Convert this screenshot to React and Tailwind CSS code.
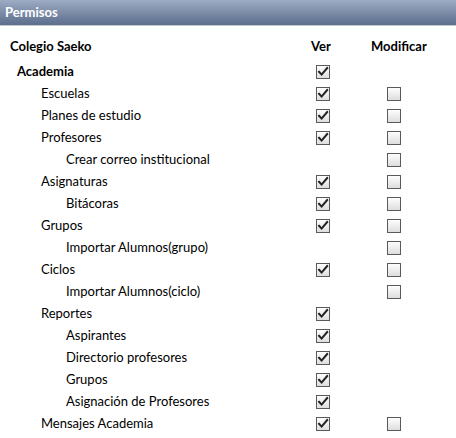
import React from "react";

const rows = [
  { label: "Academia", lvl: 1, ver: true, mod: false, bold: true },
  { label: "Escuelas", lvl: 2, ver: true, mod: true },
  { label: "Planes de estudio", lvl: 2, ver: true, mod: true },
  { label: "Profesores", lvl: 2, ver: true, mod: true },
  { label: "Crear correo institucional", lvl: 3, ver: null, mod: true },
  { label: "Asignaturas", lvl: 2, ver: true, mod: true },
  { label: "Bitácoras", lvl: 3, ver: true, mod: true },
  { label: "Grupos", lvl: 2, ver: true, mod: true },
  { label: "Importar Alumnos(grupo)", lvl: 3, ver: null, mod: true },
  { label: "Ciclos", lvl: 2, ver: true, mod: true },
  { label: "Importar Alumnos(ciclo)", lvl: 3, ver: null, mod: true },
  { label: "Reportes", lvl: 2, ver: true, mod: false },
  { label: "Aspirantes", lvl: 3, ver: true, mod: false },
  { label: "Directorio profesores", lvl: 3, ver: true, mod: false },
  { label: "Grupos", lvl: 3, ver: true, mod: false },
  { label: "Asignación de Profesores", lvl: 3, ver: true, mod: false },
  { label: "Mensajes Academia", lvl: 2, ver: true, mod: true },
];

function Box({ checked }) {
  return (
    <svg width="14" height="14" viewBox="0 0 14 14" className="block">
      <defs>
        <linearGradient id="cbg" x1="0" y1="0" x2="0" y2="1">
          <stop offset="0" stopColor="#ffffff" />
          <stop offset="1" stopColor="#dcdcdc" />
        </linearGradient>
      </defs>
      <rect x="0.5" y="0.5" width="13" height="13" fill="url(#cbg)" stroke="#5a5a5a" />
      {checked && (
        <path d="M3 6.8 L5.6 9.6 L11.2 3" fill="none" stroke="#222" strokeWidth="2" strokeLinecap="square" />
      )}
    </svg>
  );
}

const indent = { 1: "pl-[17px]", 2: "pl-[41px]", 3: "pl-[66px]" };

export default function App() {
  return (
    <div className="w-[456px] h-[438px] bg-white overflow-hidden text-[13px] text-black font-[Lato,sans-serif]">
      <div className="h-[26px] bg-gradient-to-b from-[#9eacc4] to-[#5c6e8d] flex items-center pl-[5px] border-b border-[#c8c8c8]">
        <span className="text-white font-bold text-[13px]">Permisos</span>
      </div>
      <div className="grid grid-cols-[316px_71px_1fr] h-[22px] items-center mt-[10px] font-bold">
        <div className="pl-[10px]">Colegio Saeko</div>
        <div className="-ml-[5px]">Ver</div>
        <div className="-ml-[16px]">Modificar</div>
      </div>
      <div className="mt-[3px]">
        {rows.map((r, i) => (
          <div key={i} className="grid grid-cols-[316px_71px_1fr] h-[22px] items-center">
            <div className={r.bold ? `${indent[r.lvl]} font-bold` : indent[r.lvl]}>{r.label}</div>
            <div>{r.ver !== null && <Box checked={r.ver} />}</div>
            <div>{r.mod && <Box checked={false} />}</div>
          </div>
        ))}
      </div>
    </div>
  );
}
